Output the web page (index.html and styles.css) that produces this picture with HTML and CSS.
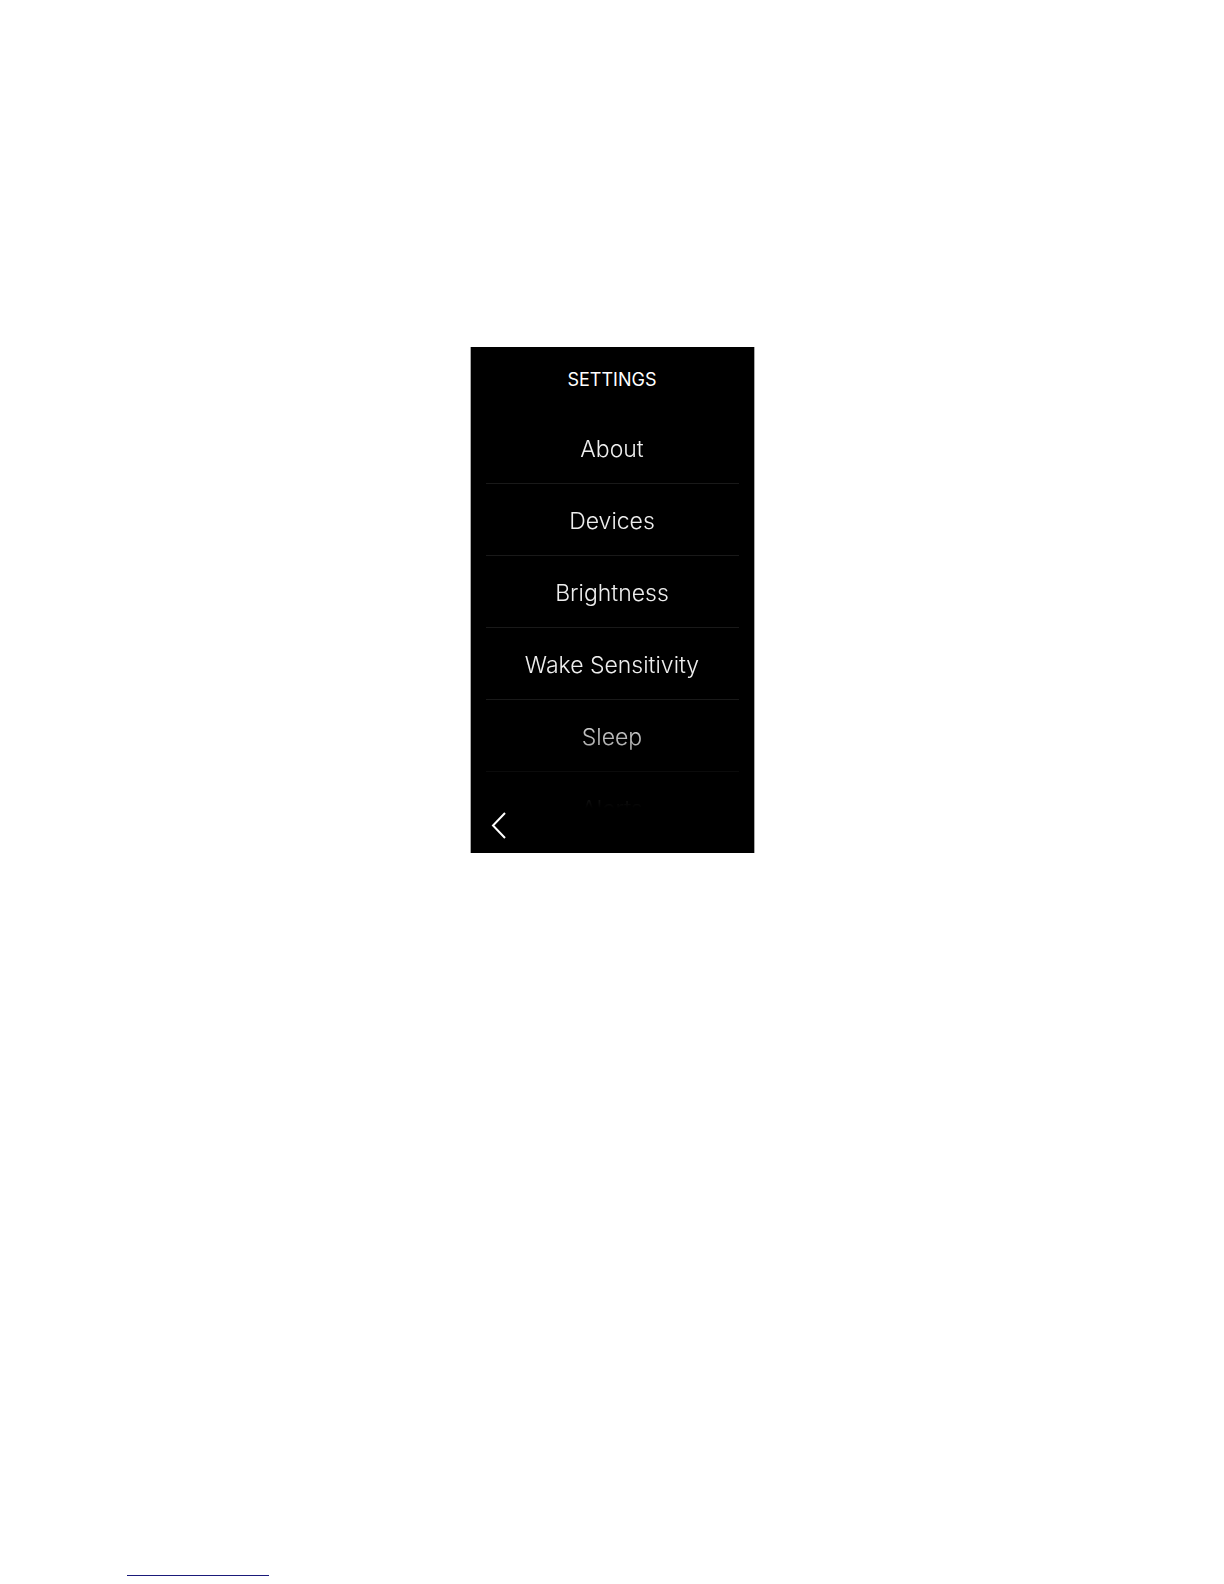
FILE: index.html
```html
<!DOCTYPE html>
<html lang="en">

<head>
    <meta charset="utf-8">
    <meta name="viewport" content="width=device-width, initial-scale=1">
    <title>Settings</title>
    <link rel="stylesheet" href="styles.css">
</head>

<body>
    <main class="page">
        <section class="settings">
            <h1 class="settings-title">SETTINGS</h1>
            <nav class="settings-list">
                <a class="settings-item" href="#about">About</a>
                <a class="settings-item" href="#devices">Devices</a>
                <a class="settings-item" href="#brightness">Brightness</a>
                <a class="settings-item" href="#wake">Wake Sensitivity</a>
                <a class="settings-item" href="#sleep">Sleep</a>
                <a class="settings-item" href="#alerts">Alerts</a>
            </nav>
            <div class="settings-bar">
                <button class="back" type="button" aria-label="Back">
                    <svg width="15" height="27" viewBox="0 0 15 27" fill="none" stroke="#fff" stroke-width="2">
                        <path d="M14 1 L2 13.5 L14 26" />
                    </svg>
                </button>
            </div>
        </section>
    </main>
    <footer class="page-footer">
        <a class="footer-link" href="#" aria-label="Home"></a>
    </footer>
</body>

</html>
```

FILE: styles.css
```css
* {
    box-sizing: border-box;
}

body {
    display: flex;
    flex-direction: column;
    min-height: 100vh;
    margin: 0;
    background: #fff;
    font-family: Inter, "Open Sans", sans-serif;
}

.page {
    flex: 1;
    padding: 347px 16px 0;
}

.settings {
    max-width: 285px;
    margin: 0 auto;
    background: #000;
    border: solid #aaa;
    border-width: 0 1px;
    color: #fff;
    text-align: center;
}

.settings-title {
    margin: 0;
    font-size: 18px;
    font-weight: 400;
    line-height: 65px;
}

/* the last rows fade out behind the bottom bar */
.settings-list {
    height: 396px;
    padding: 0 15px;
    overflow: hidden;
    -webkit-mask-image: linear-gradient(#000 72%, rgba(0, 0, 0, .7) 86%, rgba(0, 0, 0, .1) 97%, transparent);
    mask-image: linear-gradient(#000 72%, rgba(0, 0, 0, .7) 86%, rgba(0, 0, 0, .1) 97%, transparent);
}

.settings-item {
    display: block;
    height: 72px;
    border-bottom: 1px solid #191919;
    color: #eee;
    font-size: 23px;
    font-weight: 300;
    line-height: 74px;
    text-decoration: none;
}

.settings-bar {
    display: flex;
    padding: 4px 20px 14px;
}

.back {
    display: flex;
    padding: 0;
    border: 0;
    background: none;
    cursor: pointer;
}

.page-footer {
    padding: 0 127px 8px;
}

.footer-link {
    display: block;
    width: 142px;
    border-bottom: 1px solid #1a1a7a;
}
```
